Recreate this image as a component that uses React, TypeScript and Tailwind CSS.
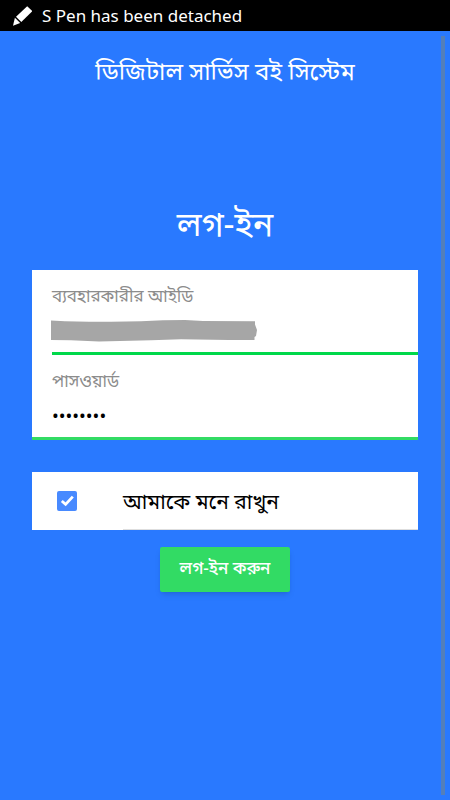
import { useState } from "react";

export default function App() {
    const [userId, setUserId] = useState("");
    const [password, setPassword] = useState("password");
    const [remember, setRemember] = useState(true);

    return (
        <div className="relative flex min-h-screen flex-col bg-[#2979ff] font-['Noto_Sans','Noto_Sans_Bengali',sans-serif]">
            {/* Status bar */}
            <div className="flex h-[31px] items-center gap-[10px] bg-black px-3 text-white">
                <svg viewBox="0 0 20 20" className="h-5 w-5" fill="currentColor" aria-hidden="true">
                    <path d="M15.2 0.2 L20.4 5.2 L9.3 15.9 L4 10.8 Z" />
                    <path d="M2.9 11.8 L8.2 16.9 L1 19.8 Z" />
                </svg>
                <p className="text-[17px] leading-7">S Pen has been detached</p>
            </div>

            <header className="flex h-20 items-center justify-center text-white">
                <h1 className="text-2xl leading-8">ডিজিটাল সার্ভিস বই সিস্টেম</h1>
            </header>

            <main className="flex flex-col px-8 pt-[88px]">
                <h2 className="text-center text-[34px] leading-12 text-white">লগ-ইন</h2>

                <form className="mt-[23px] flex flex-col" onSubmit={(e) => e.preventDefault()}>
                    <div className="border-b-[3px] border-[#32db64] bg-white pl-5">
                        <div className="relative h-[85px] border-b-[3px] border-[#00d84a] pt-3">
                            <label htmlFor="user-id" className="block text-[17px] leading-7 text-[#8c8c8c]">
                                ব্যবহারকারীর আইডি
                            </label>
                            <input
                                id="user-id"
                                type="text"
                                value={userId}
                                onChange={(e) => setUserId(e.target.value)}
                                className="block h-10 w-full bg-transparent text-lg outline-none"
                            />
                            {/* Marker stroke hiding the saved ID */}
                            <svg
                                viewBox="0 0 206 22"
                                className="pointer-events-none absolute top-[50px] -left-px h-[22px] w-[206px]"
                                fill="#a6a6a6"
                                aria-hidden="true"
                            >
                                <path d="M0 0.5 L14 1.3 L38 1.7 L60 1.8 L90 1.2 L112 0.2 L134 0 L152 1 L204 1.2 V4.5 L206 10 L205 16 L203.5 17 V20 L178 20 L130 19.2 L100 20.2 L48 21.4 L20 20.2 L0 20 Z" />
                            </svg>
                        </div>
                        <div className="h-[82px] pt-3">
                            <label htmlFor="password" className="block text-[17px] leading-7 text-[#8c8c8c]">
                                পাসওয়ার্ড
                            </label>
                            <input
                                id="password"
                                type="password"
                                value={password}
                                onChange={(e) => setPassword(e.target.value)}
                                className="block h-10 w-full bg-transparent text-lg text-black outline-none"
                            />
                        </div>
                    </div>

                    <label className="mt-8 flex h-[58px] items-center bg-white pl-[25px]">
                        <span className="relative flex h-5 w-5">
                            <input
                                type="checkbox"
                                checked={remember}
                                onChange={(e) => setRemember(e.target.checked)}
                                className="peer h-5 w-5 appearance-none rounded-xs border-2 border-[#488aff] bg-white checked:bg-[#488aff]"
                            />
                            <svg
                                viewBox="0 0 20 20"
                                className="pointer-events-none absolute inset-0 hidden peer-checked:block"
                                fill="none"
                                stroke="white"
                                strokeWidth="2.8"
                                aria-hidden="true"
                            >
                                <path d="M4.8 10 L8.6 13.4 L15.8 5.6" />
                            </svg>
                        </span>
                        <span className="ml-[46px] flex h-full flex-1 items-center border-b border-[#dedede] text-[21px] leading-8 text-black">
                            আমাকে মনে রাখুন
                        </span>
                    </label>

                    <button
                        type="submit"
                        className="mt-[17px] h-[45px] w-[130px] self-center rounded-xs bg-[#32db64] pb-1 text-[17px] font-medium text-white shadow-md"
                    >
                        লগ-ইন করুন
                    </button>
                </form>
            </main>

            {/* Scroll indicator */}
            <div className="pointer-events-none absolute top-9 right-[5px] bottom-[5px] w-1 bg-[#547fb9]" />
        </div>
    );
}
